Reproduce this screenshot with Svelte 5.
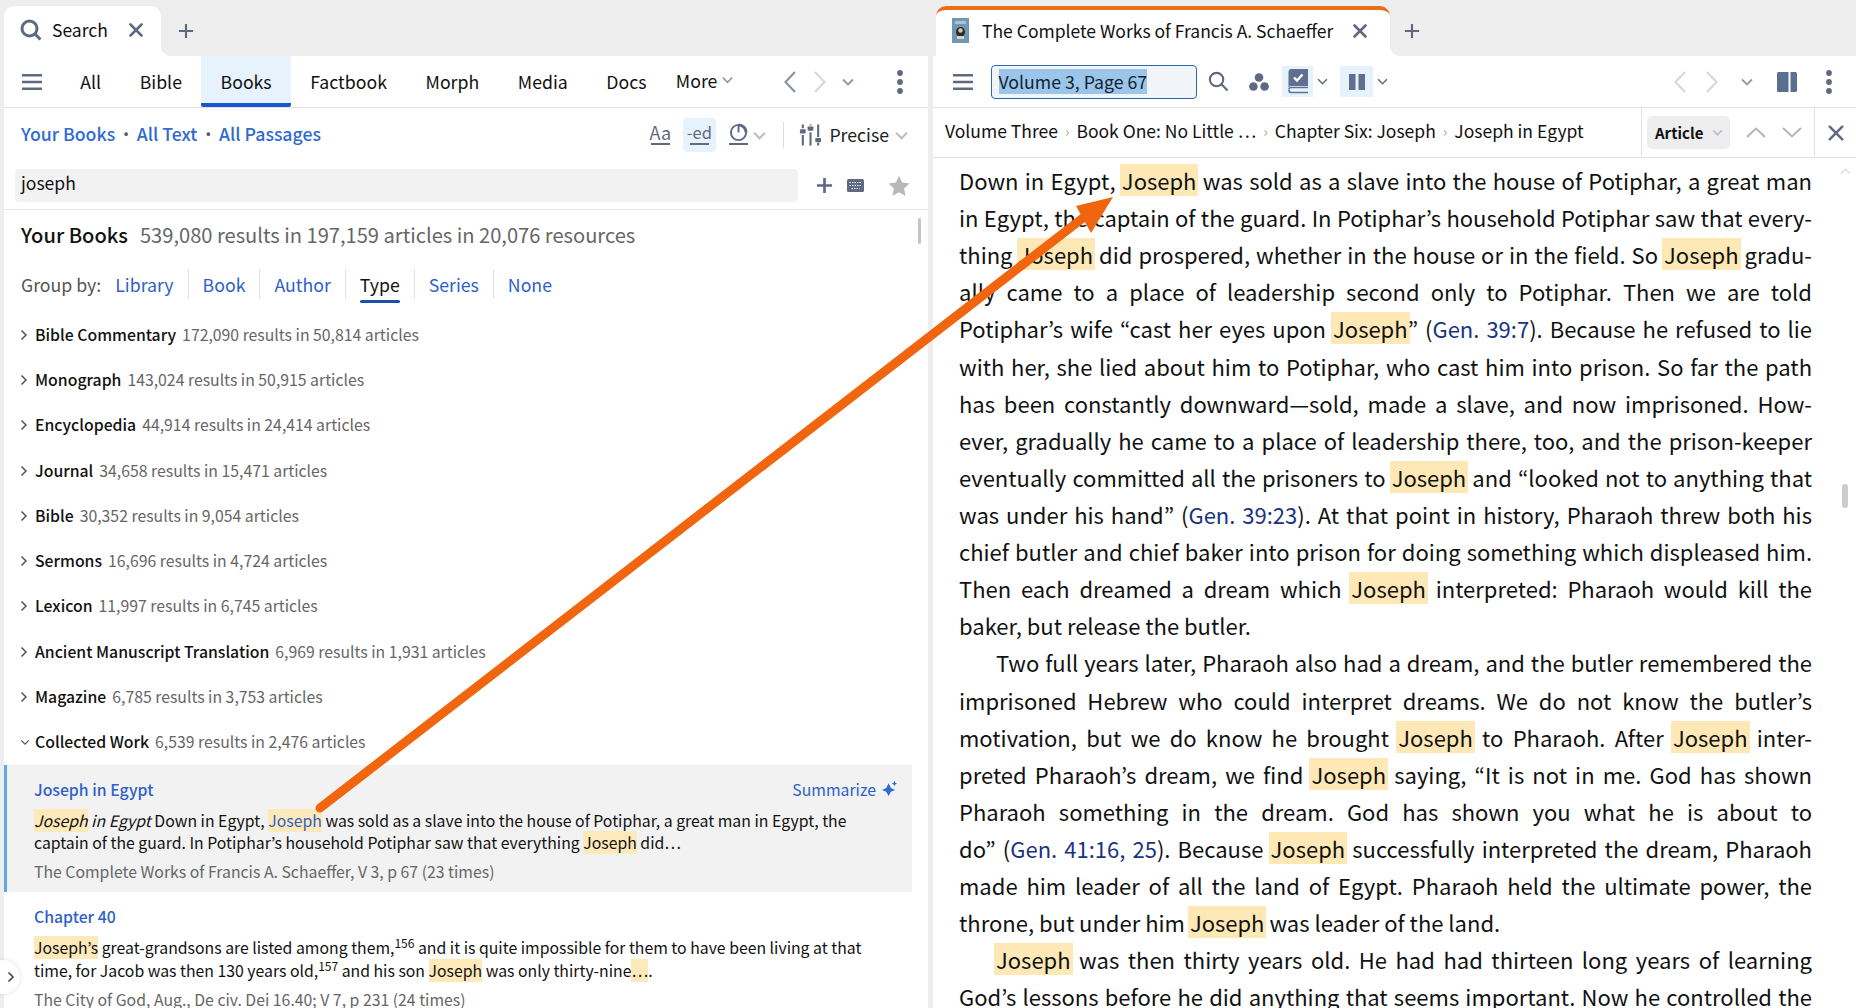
<script>
  const rows = [
    ['Bible Commentary', '172,090 results in 50,814 articles'],
    ['Monograph', '143,024 results in 50,915 articles'],
    ['Encyclopedia', '44,914 results in 24,414 articles'],
    ['Journal', '34,658 results in 15,471 articles'],
    ['Bible', '30,352 results in 9,054 articles'],
    ['Sermons', '16,696 results in 4,724 articles'],
    ['Lexicon', '11,997 results in 6,745 articles'],
    ['Ancient Manuscript Translation', '6,969 results in 1,931 articles'],
    ['Magazine', '6,785 results in 3,753 articles']
  ];
  const navTabs = ['All', 'Bible', 'Books', 'Factbook', 'Morph', 'Media', 'Docs'];
  const groups = ['Library', 'Book', 'Author', 'Type', 'Series', 'None'];
  const crumbs = ['Volume Three', 'Book One: No Little …', 'Chapter Six: Joseph', 'Joseph in Egypt'];
  const lines = [
    ['Down in Egypt, Joseph was sold as a slave into the house of Potiphar, a great man'],
    ['in Egypt, the captain of the guard. In Potiphar’s household Potiphar saw that every-'],
    ['thing Joseph did prospered, whether in the house or in the field. So Joseph gradu-'],
    ['ally came to a place of leadership second only to Potiphar. Then we are told'],
    ['Potiphar’s wife “cast her eyes upon Joseph” (Gen. 39:7). Because he refused to lie'],
    ['with her, she lied about him to Potiphar, who cast him into prison. So far the path'],
    ['has been constantly downward—sold, made a slave, and now imprisoned. How-'],
    ['ever, gradually he came to a place of leadership there, too, and the prison-keeper'],
    ['eventually committed all the prisoners to Joseph and “looked not to anything that'],
    ['was under his hand” (Gen. 39:23). At that point in history, Pharaoh threw both his'],
    ['chief butler and chief baker into prison for doing something which displeased him.'],
    ['Then each dreamed a dream which Joseph interpreted: Pharaoh would kill the'],
    ['baker, but release the butler.', 'last'],
    ['Two full years later, Pharaoh also had a dream, and the butler remembered the', 'indent'],
    ['imprisoned Hebrew who could interpret dreams. We do not know the butler’s'],
    ['motivation, but we do know he brought Joseph to Pharaoh. After Joseph inter-'],
    ['preted Pharaoh’s dream, we find Joseph saying, “It is not in me. God has shown'],
    ['Pharaoh something in the dream. God has shown you what he is about to'],
    ['do” (Gen. 41:16, 25). Because Joseph successfully interpreted the dream, Pharaoh'],
    ['made him leader of all the land of Egypt. Pharaoh held the ultimate power, the'],
    ['throne, but under him Joseph was leader of the land.', 'last'],
    ['Joseph was then thirty years old. He had had thirteen long years of learning', 'indent'],
    ['God’s lessons before he did anything that seems important. Now he controlled the']
  ];
  const split = (s) => s.split(/(Joseph|Gen\. [\d:]+(?:, 25)?)/);
</script>

{#snippet chev(cls)}
  <svg class="chev {cls}" viewBox="0 0 12 8"><path d="M1 1.500 6 6.500 11 1.500" /></svg>
{/snippet}

{#snippet kebab()}
  <svg class="kebab" viewBox="0 0 6 24"><circle cx="3" cy="3" r="2.900" /><circle cx="3" cy="12" r="2.900" /><circle cx="3" cy="21" r="2.900" /></svg>
{/snippet}

{#snippet burger()}
  <svg class="burger" viewBox="0 0 20 16"><path d="M0 1.200H20M0 8H20M0 14.800H20" /></svg>
{/snippet}

{#snippet x(cls)}
  <svg class="x {cls}" viewBox="0 0 14 14"><path d="M1.500 1.500 12.500 12.500M12.500 1.500 1.500 12.500" /></svg>
{/snippet}

{#snippet plus(cls)}
  <svg class="plus {cls}" viewBox="0 0 18 18"><path d="M9 1V17M1 9H17" /></svg>
{/snippet}

<div class="app">
  <section class="panel left">
    <div class="strip">
      <div class="tab search-tab">
        <svg class="tab-search" viewBox="0 0 22 22"><circle cx="9.500" cy="9.500" r="7.500" /><path d="M15 15 20.500 20.500" /></svg>
        <span>Search</span>
        {@render x('tab-x')}
      </div>
      <div class="rest">{@render plus('tab-plus')}</div>
    </div>

    <div class="body">
      <div class="toolbar">
        <div class="burger-wrap">{@render burger()}</div>
        <nav class="nav">
          {#each navTabs as t}
            <span class="nav-item" class:active={t === 'Books'}>{t}</span>
          {/each}
        </nav>
        <span class="more">More{@render chev('more-chev')}</span>
        <div class="pager left-pager">
          <svg class="arrow dark" viewBox="0 0 12 22"><path d="M11 1 1.500 11 11 21" /></svg>
          <svg class="arrow light" viewBox="0 0 12 22"><path d="M1 1 10.500 11 1 21" /></svg>
          {@render chev('pager-chev')}
        </div>
        <div class="kebab-wrap">{@render kebab()}</div>
      </div>

      <div class="scope">
        <div class="scope-links">
          <a>Your Books</a><i>•</i><a>All Text</a><i>•</i><a>All Passages</a>
        </div>
        <div class="scope-tools">
          <span class="opt aa">Aa</span>
          <span class="opt ed on">-ed</span>
          <span class="opt clock">
            <svg viewBox="0 0 20 20"><circle cx="10" cy="10" r="8" /><path d="M10 2V10" /><path class="thick" d="M10 2A8 8 0 0 1 18 10" /></svg>
          </span>
          {@render chev('clock-chev')}
          <span class="divider"></span>
          <svg class="sliders" viewBox="0 0 24 24">
            <path d="M4 1V5M4 12V23M12 1V2M12 9V23M20 1V14M20 20V23" />
            <rect x="1" y="6" width="6" height="4.500" rx="1" /><rect x="9" y="3" width="6" height="4.500" rx="1" /><rect x="17" y="15" width="6" height="4.500" rx="1" />
          </svg>
          <span class="precise">Precise</span>
          {@render chev('precise-chev')}
        </div>
      </div>

      <div class="query">
        <div class="query-input">joseph</div>
        {@render plus('query-plus')}
        <svg class="keyboard" viewBox="0 0 17 13">
          <rect width="17" height="13" rx="1.500" />
          <path d="M2.500 3.500h12M2.500 6.500h12M4.500 9.500h8" />
        </svg>
        <svg class="star" viewBox="0 0 24 24"><path d="M12 .8 15.400 8.300 23.500 9.200 17.500 14.700 19.200 22.800 12 18.700 4.800 22.800 6.500 14.700 .5 9.200 8.600 8.300Z" /></svg>
      </div>

      <div class="results">
        <div class="summary"><b>Your Books</b><span>539,080 results in 197,159 articles in 20,076 resources</span></div>
        <div class="groups">
          <span class="group-label">Group by:</span>
          {#each groups as g}
            <span class="group" class:current={g === 'Type'}>{g}</span>
          {/each}
        </div>
        {#each rows as r}
          <div class="row">
            <svg class="row-chev" viewBox="0 0 8 12"><path d="M1.500 1.500 6 6 1.500 10.500" /></svg>
            <b>{r[0]}</b><span>{r[1]}</span>
          </div>
        {/each}
        <div class="row open">
          <svg class="row-chev down" viewBox="0 0 12 8"><path d="M1.500 1.500 6 6 10.500 1.500" /></svg>
          <b>Collected Work</b><span>6,539 results in 2,476 articles</span>
        </div>

        <article class="hit selected">
          <div class="hit-head">
            <a>Joseph in Egypt</a>
            <span class="summarize">Summarize
              <svg viewBox="0 0 16 16"><path d="M7 2.500 9.500 7.500 14 9.500 9.500 11.500 7 16 4.500 11.500 0 9.500 4.500 7.500Z" /><path d="M13.300 0 14.200 1.800 16 2.700 14.200 3.600 13.300 5.400 12.400 3.600 10.600 2.700 12.400 1.800Z" /></svg>
            </span>
          </div>
          <p><mark><em>Joseph</em></mark> <em>in Egypt</em> Down in Egypt, <mark class="link">Joseph</mark> was sold as a slave into the house of Potiphar, a great man in Egypt, the<br />captain of the guard. In Potiphar’s household Potiphar saw that everything <mark>Joseph</mark> did…</p>
          <div class="source">The Complete Works of Francis A. Schaeffer, V 3, p 67 (23 times)</div>
        </article>

        <article class="hit">
          <div class="hit-head"><a>Chapter 40</a></div>
          <p class="tall"><mark>Joseph’s</mark> great-grandsons are listed among them,<sup>156</sup> and it is quite impossible for them to have been living at that<br />time, for Jacob was then 130 years old,<sup>157</sup> and his son <mark>Joseph</mark> was only thirty-nine<mark>…</mark>.</p>
          <div class="source">The City of God, Aug., De civ. Dei 16.40; V 7, p 231 (24 times)</div>
        </article>

        <span class="thumb left-thumb"></span>
      </div>
    </div>
  </section>

  <section class="panel right">
    <div class="strip">
      <div class="tab book-tab">
        <svg class="cover" viewBox="0 0 17 25">
          <rect width="17" height="25" fill="#6f97b6" />
          <rect x="3" y="3" width="11" height="3" fill="#a8c2d6" />
          <ellipse cx="8.500" cy="14" rx="4.500" ry="5" fill="#2c2a28" />
          <circle cx="8.500" cy="12.500" r="2.200" fill="#d9c7a8" />
          <rect x="5" y="18" width="7" height="3" fill="#ddd4c0" />
        </svg>
        <span>The Complete Works of Francis A. Schaeffer</span>
        {@render x('tab-x')}
      </div>
      <div class="rest book-rest">{@render plus('tab-plus')}</div>
    </div>

    <div class="body">
      <div class="toolbar r-toolbar">
        <div class="burger-wrap r-burger">{@render burger()}</div>
        <div class="ref-input"><span>Volume 3, Page 67</span></div>
        <svg class="r-search" viewBox="0 0 22 22"><circle cx="9" cy="9" r="7" /><path d="M14 14 20.500 20.500" /></svg>
        <svg class="dots" viewBox="0 0 20 18"><circle cx="10" cy="4.500" r="4.300" /><circle cx="4.400" cy="13.500" r="4.300" /><circle cx="15.600" cy="13.500" r="4.300" /></svg>
        <span class="icon-box book-box">
          <svg viewBox="0 0 20 25">
            <path class="fill" d="M3 0H20V17H3C1.500 17 .5 18 .5 19V3C.5 1.500 1.500 0 3 0Z" />
            <path class="tick" d="M6 8.500 9 11.500 14.500 5.500" />
            <path class="edge" d="M1 20.500C1 19 2 18.500 3 18.500H20M1 21C1 23 2 23.500 3 23.500H20" />
          </svg>
        </span>
        {@render chev('box-chev')}
        <span class="icon-box cols-box">
          <svg viewBox="0 0 16 16"><rect width="6.500" height="16" /><rect x="9.500" width="6.500" height="16" /></svg>
        </span>
        {@render chev('box-chev')}
        <div class="pager right-pager">
          <svg class="arrow light" viewBox="0 0 12 22"><path d="M11 1 1.500 11 11 21" /></svg>
          <svg class="arrow light" viewBox="0 0 12 22"><path d="M1 1 10.500 11 1 21" /></svg>
          {@render chev('pager-chev')}
        </div>
        <svg class="split" viewBox="0 0 20 20"><path d="M1.500 0H11.500V20H1.500A1.500 1.500 0 0 1 0 18.500V1.500A1.500 1.500 0 0 1 1.500 0ZM13.500 0H18.500A1.500 1.500 0 0 1 20 1.500V18.500A1.500 1.500 0 0 1 18.500 20H13.500Z" /></svg>
        <div class="kebab-wrap r-kebab">{@render kebab()}</div>
      </div>

      <div class="crumbbar">
        <div class="crumbs">
          {#each crumbs as c, i}
            {#if i > 0}<i>›</i>{/if}<span>{c}</span>
          {/each}
        </div>
        <div class="article-tools">
          <span class="pill">Article{@render chev('pill-chev')}</span>
          <svg class="updown" viewBox="0 0 20 11"><path d="M1 10 10 1.500 19 10" /></svg>
          <svg class="updown" viewBox="0 0 20 11"><path d="M1 1 10 9.500 19 1" /></svg>
        </div>
        <div class="close-cell">{@render x('close-x')}</div>
      </div>

      <div class="reader">
        {#each lines as [text, kind]}
          <div class="line {kind ?? ''}">
            {#each split(text) as part}
              {#if part === 'Joseph'}<mark>{part}</mark>{:else if part.startsWith('Gen. ')}<a>{part}</a>{:else}{part}{/if}
            {/each}
          </div>
        {/each}
        <svg class="scroll-up" viewBox="0 0 12 7"><path d="M1 6 6 1 11 6" /></svg>
        <span class="thumb right-thumb"></span>
      </div>
    </div>
  </section>

  <button class="collapse" aria-label="Expand">
    <svg viewBox="0 0 8 12"><path d="M1.500 1.500 6 6 1.500 10.500" /></svg>
  </button>

  <svg class="callout" viewBox="0 0 1856 1008">
    <path class="shaft" d="M320 808 1092 211" />
    <path class="head" d="M1113 197 1076 206 1091 233Z" />
  </svg>
</div>

<style>
  :global(body) { margin: 0; }
  .app {
    position: relative;
    display: flex;
    width: 1856px;
    height: 1008px;
    overflow: hidden;
    background: #eeeeee;
    color: #111;
    font-family: "Noto Sans CJK KR", "Noto Sans", sans-serif;
    font-size: 17.700px;
    line-height: 24px;
  }
  svg { display: block; flex: none; fill: none; }
  a { color: #2f6bd0; }
  .panel { display: flex; flex-direction: column; height: 100%; }
  .left { width: 924px; margin-left: 4px; }
  .right { flex: 1; margin-left: 5px; min-width: 0; }

  .strip { display: flex; height: 56px; flex: none; }
  .tab {
    display: flex;
    align-items: center;
    margin-top: 6px;
    background: #fff;
    border-radius: 10px 10px 0 0;
    box-sizing: border-box;
    white-space: nowrap;
    font-size: 17.500px;
    padding-bottom: 3px;
  }
  .search-tab { width: 157px; padding-left: 16px; }
  .search-tab span { margin-left: 10px; }
  .search-tab .tab-x { margin-left: 21px; }
  .book-tab { width: 454px; margin-left: 3px; padding-left: 16px; padding-bottom: 5px; border-top: 4px solid #e96f1b; }
  .book-tab span { margin-left: 13px; }
  .book-tab .tab-x { margin-left: 20px; }
  .tab-search { width: 22px; height: 22px; stroke: #5f6980; stroke-width: 3; }
  .cover { width: 17px; height: 25px; }
  .rest { position: relative; flex: 1; background: #eee; display: flex; align-items: center; padding-left: 17px; }
  .book-rest { padding-left: 14px; }
  .rest::before {
    content: "";
    position: absolute;
    left: 0;
    bottom: 0;
    width: 10px;
    height: 10px;
    background: radial-gradient(circle at 100% 0, #eee 9.500px, #fff 10.500px);
  }
  .x { stroke: #5f6980; stroke-width: 2.600; stroke-linecap: round; }
  .tab-x { width: 14px; height: 14px; }
  .plus { stroke: #5f6980; stroke-width: 2.400; }
  .tab-plus { width: 16px; height: 16px; margin-top: 6px; }

  .body { flex: 1; min-height: 0; background: #fff; display: flex; flex-direction: column; }
  .toolbar {
    display: flex;
    align-items: center;
    height: 51px;
    flex: none;
    border-bottom: 1px solid #e2e2e2;
    padding-right: 25px;
  }
  .burger-wrap { width: 57px; padding-left: 18px; box-sizing: border-box; flex: none; }
  .burger { width: 20px; height: 16px; stroke: #5f6980; stroke-width: 2.400; }
  .nav { display: flex; align-self: stretch; }
  .nav-item {
    display: flex;
    align-items: center;
    padding: 0 19.300px 2px;
    box-sizing: border-box;
  }
  .nav-item.active { background: #e6f3fd; border-bottom: 4px solid #1b57cf; border-radius: 0 0 2px 2px; padding-top: 2px; padding-bottom: 0; }
  .more { display: flex; align-items: center; margin-left: 10px; padding-bottom: 4px; }
  .chev { stroke: #8f97a8; stroke-width: 1.800; fill: none; }
  .more-chev { width: 11px; height: 8px; margin-left: 5px; }
  .pager { display: flex; align-items: center; }
  .left-pager { margin-left: auto; gap: 18px; }
  .right-pager { margin-left: auto; gap: 20px; }
  .arrow { width: 12px; height: 22px; stroke-width: 2.200; }
  .arrow.dark { stroke: #8c93a3; }
  .arrow.light { stroke: #d8d8d8; }
  .pager-chev { width: 12px; height: 8px; margin-left: 3px; }
  .left-pager .pager-chev { margin-left: -2px; }
  .kebab-wrap { margin-left: 43px; }
  .kebab { width: 6px; height: 24px; fill: #5f6980; }

  .scope { display: flex; align-items: center; justify-content: space-between; height: 54px; padding: 0 20px 0 17px; flex: none; }
  .scope-links { display: flex; align-items: center; font-weight: 500; color: #2f6bd0; padding-bottom: 4px; }
  .scope-links i { font-style: normal; margin: 0 8.500px; font-size: 13px; color: #556; }
  .scope-tools { display: flex; align-items: center; color: #222; }
  .opt {
    display: flex;
    align-items: center;
    justify-content: center;
    color: #5f6980;
    box-sizing: border-box;
    font-size: 18px;
    position: relative;
    width: 33px;
    height: 34px;
    padding-bottom: 6px;
    margin-right: 6px;
  }
  .opt::after { content: ""; position: absolute; left: 50%; width: 19px; margin-left: -9.500px; bottom: 7px; height: 2px; background: #5f6980; }
  .ed { background: #e6f3fd; border-radius: 4px; font-size: 16.500px; }
  .clock { margin-right: -1.500px; }
  .clock svg { width: 19px; height: 19px; stroke: #5f6980; stroke-width: 2; }
  .clock .thick { stroke-width: 3; }
  .clock-chev { width: 13px; height: 9px; stroke: #b9bec9; stroke-width: 2; }
  .divider { width: 1px; height: 26px; background: #ddd; margin: 0 15px 0 17px; }
  .sliders { width: 23px; height: 24px; stroke: #5f6980; stroke-width: 2.200; }
  .sliders rect { fill: #5f6980; stroke: none; }
  .precise { margin-left: 7px; padding-bottom: 3px; }
  .precise-chev { width: 13px; height: 9px; margin-left: 6px; stroke: #b9bec9; stroke-width: 2; }

  .query { display: flex; align-items: center; height: 47px; padding: 0 18px 0 11px; border-bottom: 1px solid #e8e8e8; flex: none; }
  .query-input {
    width: 785px;
    height: 33px;
    line-height: 28px;
    background: #f2f2f2;
    border-radius: 4px;
    padding-left: 6px;
    box-sizing: border-box;
    font-size: 17.500px;
  }
  .query-plus { width: 17px; height: 17px; margin-left: 18px; stroke-width: 2.800; }
  .keyboard { width: 17px; height: 13px; margin-left: 14px; fill: #5f6980; stroke: #e8ebf1; stroke-width: 1; stroke-dasharray: 1.500 1; }
  .keyboard rect { stroke: none; }
  .star { width: 22px; height: 22px; margin-left: 24px; fill: #b8b8b8; }

  .results { position: relative; flex: 1; min-height: 0; overflow: hidden; }
  .summary { display: flex; align-items: center; height: 52px; padding: 0 17px 2px; box-sizing: border-box; font-size: 20.100px; }
  .summary b { font-weight: 500; margin-right: 12px; }
  .summary span { color: #666; }
  .groups { display: flex; align-items: center; height: 46px; box-sizing: border-box; padding: 0 0 2px 17px; margin-bottom: 4px; }
  .group-label { color: #555; }
  .group { color: #2f5fc7; padding: 0 14px; border-right: 1px solid #e2e2e2; height: 30px; line-height: 30px; position: relative; }
  .group:last-child { border: 0; }
  .group.current { color: #111; }
  .group.current::after { content: ""; position: absolute; left: 14px; right: 14px; bottom: -4px; height: 3px; background: #1b4fa8; border-radius: 2px; }

  .row { display: flex; align-items: center; height: 45.300px; padding-left: 16px; font-size: 15.800px; white-space: nowrap; }
  .row b { font-weight: 500; margin-right: 6px; }
  .row span { color: #666; }
  .row-chev { width: 8px; height: 12px; stroke: #555; stroke-width: 1.500; margin-right: 7px; }
  .row-chev.down { width: 10px; height: 7px; margin-right: 5px; }

  .hit { width: 908px; box-sizing: border-box; padding: 0 15px 0 30px; font-size: 15.800px; }
  .hit.selected { background: #f2f2f2; border-left: 3px solid #5fa8e3; padding-left: 27px; height: 127px; }
  .hit-head { display: flex; justify-content: space-between; align-items: center; padding-top: 13px; height: 24px; box-sizing: content-box; }
  .hit a { color: #2f5fc7; font-weight: 500; }
  .summarize { display: flex; align-items: center; gap: 6px; color: #2f5fc7; }
  .summarize svg { width: 15px; height: 15px; fill: #2f6bd0; margin-top: -2px; }
  p { margin: 8px 0 0; line-height: 22px; white-space: nowrap; }
  p.tall { line-height: 23px; margin-top: 7px; }
  mark { background: #fde9b9; color: inherit; }
  mark.link { color: #2f5fc7; }
  sup { font-size: 12px; line-height: 0; }
  .source { color: #666; margin-top: 6px; white-space: nowrap; }

  .thumb { position: absolute; background: #c4c4c4; border-radius: 2px; }
  .left-thumb { top: 8px; right: 7px; width: 3px; height: 26px; }

  .r-toolbar { padding-right: 24px; }
  .r-burger { width: 58px; padding-left: 20px; }
  .ref-input {
    width: 206px;
    height: 34px;
    flex: none;
    display: flex;
    align-items: center;
    padding-left: 6.500px;
    box-sizing: border-box;
    background: #f1f5f9;
    border: 1.500px solid #2d68ad;
    border-radius: 4px;
    color: #123;
  }
  .ref-input span { background: #9cc5ea; line-height: 25px; }
  .r-search { width: 21px; height: 21px; stroke: #5f6980; stroke-width: 2.200; margin-left: 11px; }
  .dots { width: 20px; height: 18px; fill: #5f6980; margin-left: 20px; }
  .icon-box { display: flex; align-items: center; justify-content: center; height: 31px; background: #e6f3fd; margin-left: 13px; flex: none; }
  .book-box { width: 31px; }
  .book-box svg { width: 20px; height: 25px; }
  .book-box .fill { fill: #5f6f8f; }
  .book-box .tick { stroke: #fff; stroke-width: 2.400; }
  .book-box .edge { stroke: #5f6f8f; stroke-width: 1.600; }
  .cols-box { width: 33px; margin-left: 12px; }
  .cols-box svg { width: 16px; height: 16px; fill: #5f6f8f; }
  .box-chev { width: 11px; height: 7px; margin-left: 4px; stroke: #5f6980; }
  .split { width: 20px; height: 20px; fill: #5b6f92; margin-left: 24px; }
  .r-kebab { margin-left: 29px; }

  .crumbbar { display: flex; height: 49px; align-items: stretch; border-bottom: 1px solid #e2e2e2; flex: none; }
  .crumbs { flex: 1; display: flex; align-items: center; padding: 0 0 3px 12px; white-space: nowrap; font-size: 17.500px; }
  .crumbs i { font-style: normal; margin: 0 7px; color: #aaa; font-size: 15px; }
  .article-tools { display: flex; align-items: center; width: 173px; box-sizing: border-box; border-left: 1px solid #e2e2e2; padding-left: 5px; flex: none; }
  .pill {
    display: flex;
    align-items: center;
    width: 83px;
    height: 33px;
    padding-left: 8px;
    box-sizing: border-box;
    background: #eeeeee;
    border-radius: 5px;
    font-size: 15px;
    font-weight: 700;
  }
  .pill-chev { width: 11px; height: 7px; margin-left: 9px; stroke: #b9c3d0; stroke-width: 2; }
  .updown { width: 20px; height: 11px; stroke: #b4b4b4; stroke-width: 1.900; margin-left: 16px; }
  .close-cell { width: 41px; display: flex; align-items: center; justify-content: center; border-left: 1px solid #e2e2e2; }
  .close-x { width: 16px; height: 16px; stroke: #5f6980; stroke-width: 2.200; }

  .reader { position: relative; flex: 1; min-height: 0; overflow: hidden; padding: 4px 44px 0 26px; font-size: 22px; line-height: 37.120px; }
  .line { text-align: justify; text-align-last: justify; height: 37.120px; }
  .line.last { text-align-last: left; }
  .line.indent { padding-left: 37px; }
  .reader mark { background: #fde8b6; padding: 0 2px; margin: 0 -2px; }
  .reader a { color: #1a3380; }
  .scroll-up { position: absolute; top: 10px; right: 5px; width: 11px; height: 7px; stroke: #ddd; stroke-width: 1.600; }
  .right-thumb { top: 326px; right: 8px; width: 6px; height: 24px; border-radius: 3px; background: #ccc; }

  .collapse {
    position: absolute;
    left: -14px;
    top: 960px;
    width: 34px;
    height: 34px;
    border: 0;
    padding: 0;
    border-radius: 50%;
    background: #fff;
    box-shadow: 0 0 5px rgba(0,0,0,.12);
    display: flex;
    align-items: center;
    justify-content: center;
  }
  .collapse svg { width: 8px; height: 12px; stroke: #444; stroke-width: 1.600; margin-left: 15px; }

  .callout { position: absolute; inset: 0; width: 1856px; height: 1008px; pointer-events: none; }
  .shaft { stroke: #f0650e; stroke-width: 9; stroke-linecap: round; }
  .head { fill: #f0650e; }
</style>
